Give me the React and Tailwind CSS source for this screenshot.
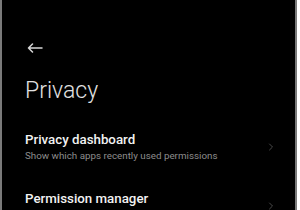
import { ChevronRight } from "lucide-react";

const items = [
  { title: "Privacy dashboard", sub: "Show which apps recently used permissions" },
  { title: "Permission manager", sub: "Control app access to your data" },
];

function Row({ title, sub }) {
  return (
    <div className="flex items-center shrink-0 pr-[18px] h-[59px]">
      <div className="flex-1 min-w-0">
        <p className="text-[13.3px] leading-[16px] font-medium text-[#f2f2f2] whitespace-nowrap">{title}</p>
        <p className="text-[9.8px] leading-[13px] text-[#8c8c8c] whitespace-nowrap mt-[1px]">{sub}</p>
      </div>
      <ChevronRight size={12} strokeWidth={2} className="shrink-0 text-[#4a4a4a]" />
    </div>
  );
}

export default function App() {
  return (
    <div className="w-[300px] h-[210px] bg-white flex overflow-hidden" style={{ fontFamily: "Roboto, 'Noto Sans', sans-serif" }}>
      <div className="w-[297px] h-full shrink-0 bg-black border-l-2 border-r-2 border-[#7a7a7a] flex flex-col pl-[23px] overflow-hidden">
        <svg width="16" height="10" viewBox="0 0 16 10" className="shrink-0 mt-[43px] ml-[2px]" fill="none" stroke="#d8d8d8" strokeWidth="1.5" strokeLinecap="round" strokeLinejoin="round">
          <path d="M15 5H1.5M5.5 1L1.5 5L5.5 9" />
        </svg>
        <h1 className="shrink-0 mt-[24px] text-[23px] leading-[28px] font-light text-[#e2e2e2]">Privacy</h1>
        <div className="shrink-0 mt-[12px] flex flex-col">
          {items.map((it) => (
            <Row key={it.title} {...it} />
          ))}
        </div>
      </div>
    </div>
  );
}
